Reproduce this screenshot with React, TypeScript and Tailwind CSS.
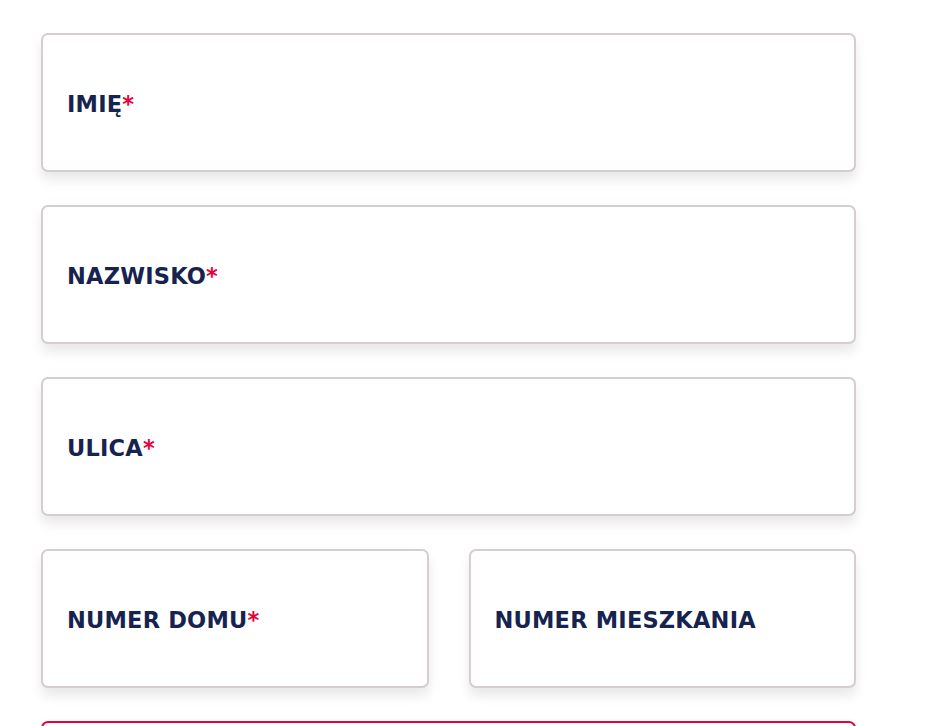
import React from "react";

function Field({ label, required }: { label: string; required?: boolean }) {
  return (
    <div className="flex h-[139px] items-center rounded-[7px] border-2 border-[#d6cdce] bg-white pl-[24px] pt-[4px] shadow-[0_8px_12px_rgba(0,0,0,0.09)]">
      <span className="text-[22.5px] font-bold leading-none tracking-[0.2px] text-[#17234f]" style={{ fontFamily: "'DejaVu Sans', sans-serif" }}>
        {label}
        {required && <span className="text-[#e8003d]">*</span>}
      </span>
    </div>
  );
}

export default function App() {
  return (
    <div className="h-[726px] w-[938px] overflow-hidden bg-white">
      <div className="ml-[41px] flex w-[815px] flex-col gap-[33px] pt-[33px]">
        <Field label="IMIĘ" required />
        <Field label="NAZWISKO" required />
        <Field label="ULICA" required />
        <div className="grid grid-cols-2 gap-[40px]">
          <Field label="NUMER DOMU" required />
          <Field label="NUMER MIESZKANIA" />
        </div>
        <div className="h-[139px] rounded-[7px] border-2 border-[#e8003d] bg-white" />
      </div>
    </div>
  );
}
